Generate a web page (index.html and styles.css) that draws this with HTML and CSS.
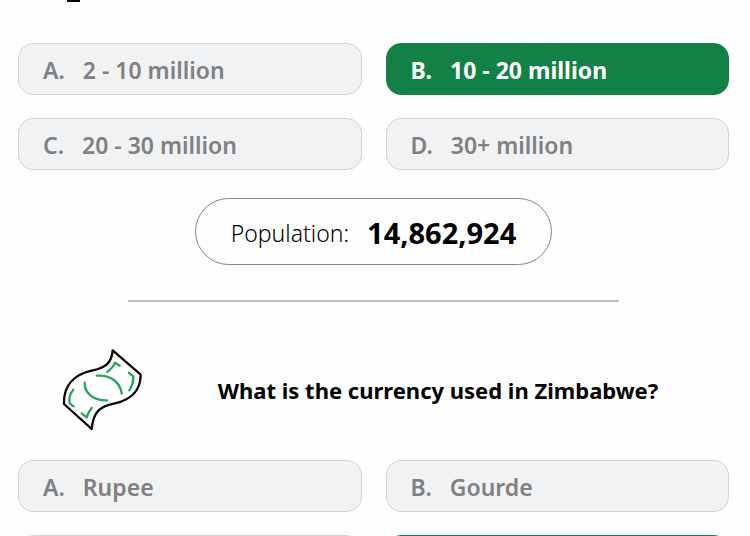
FILE: index.html
```html
<!DOCTYPE html>
<html lang="en">
<head>
	<meta charset="UTF-8">
	<meta name="viewport" content="width=device-width, initial-scale=1.0">
	<title>Zimbabwe</title>
	<link rel="stylesheet" href="styles.css">
</head>
<body>
	<main class="quiz">
		<section class="card">
			<svg class="people" viewBox="0 0 14 2" aria-hidden="true">
				<rect width="13" height="2" fill="#000"/>
			</svg>
			<div class="options">
				<button class="option" type="button"><span>A.</span><span>2 - 10 million</span></button>
				<button class="option correct" type="button"><span>B.</span><span>10 - 20 million</span></button>
				<button class="option" type="button"><span>C.</span><span>20 - 30 million</span></button>
				<button class="option" type="button"><span>D.</span><span>30+ million</span></button>
			</div>
			<p class="answer"><span>Population:</span><strong>14,862,924</strong></p>
		</section>

		<hr class="divider">

		<section class="card">
			<div class="question">
				<svg class="money" viewBox="36 27 240 246" aria-hidden="true">
					<path class="note" d="M188 31L272 104C272 160 235 180 195 190C150 198 130 215 125 267L42 192C40 130 80 102 125 92C165 84 185 70 188 31Z"/>
					<path class="mark" d="M172 95Q188 85 195 68L209 77M237 99L250 109Q250 135 238 151M140 107C180 104 210 125 215 160M104 128C104 160 130 182 171 181M70 149Q54 170 59 190L71 199M95 220L110 232Q114 218 125 204"/>
				</svg>
				<h2>What is the currency used in Zimbabwe?</h2>
			</div>
			<div class="options">
				<button class="option" type="button"><span>A.</span><span>Rupee</span></button>
				<button class="option" type="button"><span>B.</span><span>Gourde</span></button>
				<button class="option" type="button"></button>
				<button class="option correct" type="button"></button>
			</div>
		</section>
	</main>
</body>
</html>
```
FILE: styles.css
```css
*{
	box-sizing: border-box;
}
body{
	margin: 0;
	background-color: #fefefe;
	color: #000;
	font-family: "Noto Sans", "Open Sans", sans-serif;
}
.quiz{
	height: 100vh;
	overflow: hidden;
	padding: 0 21px 0 18px;
}
.people{
	display: block;
	width: 14px;
	height: 2px;
	margin: 0 0 41px 49px;
}
.options{
	display: grid;
	grid-template-columns: 1fr 1fr;
	gap: 23px 24px;
}
.option{
	display: flex;
	align-items: center;
	gap: 18px;
	min-height: 52px;
	padding: 2px 24px 0;
	border: 1px solid #d0d4d8;
	border-radius: 15px;
	background-color: #f1f2f4;
	color: #808080;
	font: inherit;
	font-size: 23px;
	font-weight: 600;
	text-align: left;
	cursor: pointer;
}
.correct{
	border-color: #138045;
	background-color: #138045;
	color: #fff;
	font-weight: 700;
}
.answer{
	display: flex;
	align-items: center;
	gap: 18px;
	width: fit-content;
	height: 67px;
	margin: 28px auto 35px;
	padding: 2px 35px 0;
	border: 1px solid #80868c;
	border-radius: 34px;
	font-size: 23px;
	font-weight: 300;
}
.answer strong{
	font-size: 29px;
	font-weight: 700;
}
.divider{
	width: 69%;
	height: 2px;
	margin: 0 auto;
	border: 0;
	background-color: #bebebe;
}
.question{
	display: flex;
	align-items: center;
	margin: 47px 0 29px;
	padding-left: 44px;
}
.question h2{
	flex: 1;
	margin: 0;
	padding-left: 5px;
	font-size: 22px;
	font-weight: 700;
	text-align: center;
}
.money{
	width: 80px;
	height: 82px;
	fill: none;
	stroke-width: 7;
	stroke-linecap: round;
	stroke-linejoin: round;
}
.note{
	fill: #fff;
	stroke: #0b0508;
}
.mark{
	stroke: #27a35f;
}
```
